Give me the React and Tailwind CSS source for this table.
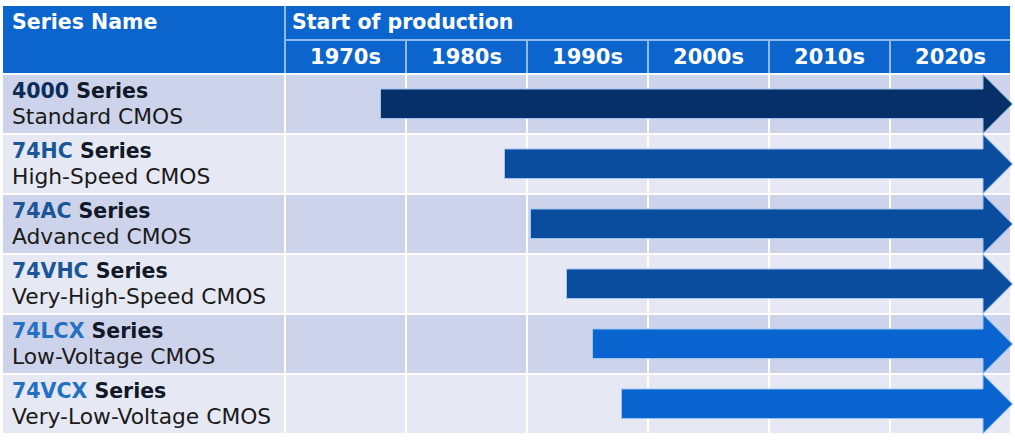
const YEARS = ['1970s', '1980s', '1990s', '2000s', '2010s', '2020s']

const SERIES = [
  { code: '4000', sub: 'Standard CMOS', start: 94, codeColor: 'text-[#0c2c5c]', fill: '#083068' },
  { code: '74HC', sub: 'High-Speed CMOS', start: 218, codeColor: 'text-[#1b5698]', fill: '#0a4c9e' },
  { code: '74AC', sub: 'Advanced CMOS', start: 244, codeColor: 'text-[#1b5698]', fill: '#0a4c9e' },
  { code: '74VHC', sub: 'Very-High-Speed CMOS', start: 280, codeColor: 'text-[#1b5698]', fill: '#0a4c9e' },
  { code: '74LCX', sub: 'Low-Voltage CMOS', start: 306, codeColor: 'text-[#2470c2]', fill: '#0a64cf' },
  { code: '74VCX', sub: 'Very-Low-Voltage CMOS', start: 335, codeColor: 'text-[#2470c2]', fill: '#0a64cf' },
]

const TIP = 727
const HEAD = 30

function Arrow({ start, fill }) {
  const w = TIP - start
  const base = w - HEAD
  return (
    <svg
      className="absolute top-0 pointer-events-none"
      style={{ left: start }}
      width={w}
      height={60}
      viewBox={`0 0 ${w} 60`}
    >
      <polygon
        points={`0.5,15 ${base},15 ${base},0.5 ${w - 0.5},30 ${base},59.5 ${base},44.5 0.5,44.5`}
        fill={fill}
        stroke="#9cc4f2"
        strokeWidth="1"
      />
    </svg>
  )
}

export default function App() {
  return (
    <div className="w-[1015px] h-[441px] bg-white pl-[3px] pt-[6px] font-['DejaVu_Sans',Verdana,sans-serif]">
      <div className="w-[1007px]">
        {/* header */}
        <div className="grid grid-cols-[281px_repeat(6,1fr)] grid-rows-[33px_32px] gap-[2px] bg-[#8fbcec] text-white font-bold text-[20.5px]">
          <div className="row-span-2 bg-[#0b65cd] pl-[9px] pt-[2px] leading-[28px]">Series Name</div>
          <div className="col-span-6 bg-[#0b65cd] pl-[6px] pt-[2px] leading-[28px]">Start of production</div>
          {YEARS.map((y) => (
            <div key={y} className="bg-[#0b65cd] flex items-center justify-center leading-none text-[21px]">
              {y}
            </div>
          ))}
        </div>

        {/* body */}
        <div className="flex flex-col gap-[2px] bg-white pt-[2px]">
          {SERIES.map((s, i) => {
            const bg = i % 2 === 0 ? 'bg-[#cdd3ea]' : 'bg-[#e6e9f4]'
            return (
              <div key={s.code} className="relative grid grid-cols-[281px_repeat(6,1fr)] gap-[2px] h-[58px]">
                <div className={`${bg} pl-[9px] flex flex-col justify-center leading-[26px]`}>
                  <div className="font-bold text-[20.5px]">
                    <span className={s.codeColor}>{s.code}</span>{' '}
                    <span className="text-[#111827]">Series</span>
                  </div>
                  <div className="text-[#1a1a1a] text-[21.8px]">{s.sub}</div>
                </div>
                {YEARS.map((y) => (
                  <div key={y} className={bg} />
                ))}
                <div className="absolute left-[283px] top-[-1px] h-[60px] w-[730px]">
                  <Arrow start={s.start} fill={s.fill} />
                </div>
              </div>
            )
          })}
        </div>
      </div>
    </div>
  )
}
